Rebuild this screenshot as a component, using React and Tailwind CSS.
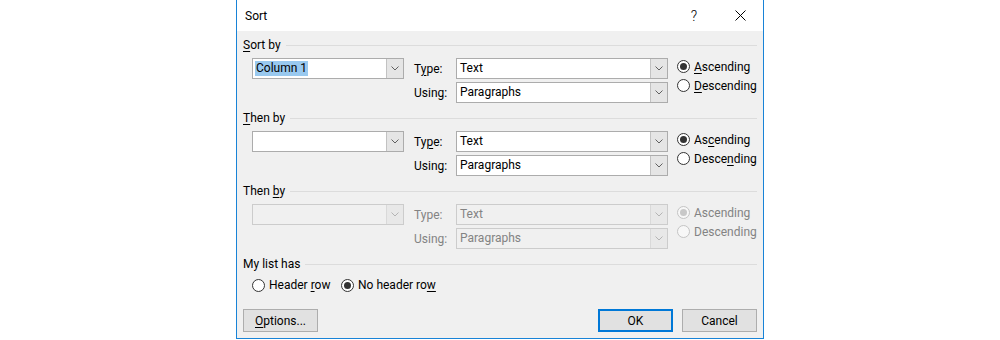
const FONT = "font-['Roboto',sans-serif]"

function K({ children }) {
  return <span className="underline underline-offset-[2px] decoration-1">{children}</span>
}

function Chevron({ disabled }) {
  return (
    <svg width="8" height="5" viewBox="0 0 8 5" className="block">
      <path
        d="M0.5 0.5 L4 4 L7.5 0.5"
        fill="none"
        stroke={disabled ? '#b4b4b4' : '#606060'}
        strokeWidth="1"
      />
    </svg>
  )
}

function Combo({ width, value, selected, disabled }) {
  return (
    <div
      className={
        'flex h-[21px] border ' +
        (disabled ? 'border-[#cccccc] bg-[#f0f0f0]' : 'border-[#acacac] bg-white')
      }
      style={{ width }}
    >
      <div className="flex min-w-0 flex-1 items-center pl-[2px]">
        {value ? (
          <span
            className={
              'px-px leading-[15px] ' +
              (selected ? 'bg-[#99c9ef] text-black' : disabled ? 'text-[#838383]' : 'text-black')
            }
          >
            {value}
          </span>
        ) : null}
      </div>
      <div
        className={
          'flex w-[17px] items-center justify-center border-l ' +
          (disabled ? 'border-[#d9d9d9] bg-[#e8e8e8]' : 'border-[#c2c2c2] bg-[#e5e5e5]')
        }
      >
        <Chevron disabled={disabled} />
      </div>
    </div>
  )
}

function Radio({ checked, disabled, children, className = '' }) {
  return (
    <div className={'flex items-center gap-[4px] ' + className}>
      <div
        className={
          'flex h-[13px] w-[13px] shrink-0 items-center justify-center rounded-full border ' +
          (disabled ? 'border-[#c4c4c4] bg-[#f7f7f7]' : 'border-[#333333] bg-white')
        }
      >
        {checked ? (
          <div
            className={
              'h-[7px] w-[7px] rounded-full ' + (disabled ? 'bg-[#c8c8c8]' : 'bg-[#333333]')
            }
          />
        ) : null}
      </div>
      <span className={disabled ? 'text-[#838383]' : 'text-black'}>{children}</span>
    </div>
  )
}

function Header({ children, className = '' }) {
  return (
    <div className={'flex h-4 items-center px-[6px] ' + className}>
      <span>{children}</span>
      <div className="ml-[5px] h-px flex-1 bg-[#dcdcdc]" />
    </div>
  )
}

function SortSection({ title, column, disabled, typeLabel, asc, desc, className = '' }) {
  const labelColor = disabled ? 'text-[#838383]' : 'text-black'
  return (
    <div className={className}>
      <Header>{title}</Header>
      <div className="mt-[5px] flex pl-[15px]">
        <Combo width={152} value={column} selected={!!column} disabled={disabled} />
        <div className="ml-[10px] flex flex-col gap-[3px]">
          <div className="flex h-[21px] items-center">
            <span className={'w-[42px] ' + labelColor}>{typeLabel}</span>
            <Combo width={212} value="Text" disabled={disabled} />
          </div>
          <div className="flex h-[21px] items-center">
            <span className={'w-[42px] ' + labelColor}>Using:</span>
            <Combo width={212} value="Paragraphs" disabled={disabled} />
          </div>
        </div>
        <div className="-mt-px ml-[9px] flex flex-col">
          <Radio checked disabled={disabled} className="h-[19px]">
            {asc}
          </Radio>
          <Radio disabled={disabled} className="h-[19px]">
            {desc}
          </Radio>
        </div>
      </div>
    </div>
  )
}

function Button({ children, primary }) {
  return (
    <div
      className={
        'flex h-[23px] w-[75px] items-center justify-center bg-[#e1e1e1] ' +
        (primary ? 'border-2 border-[#0078d7]' : 'border border-[#adadad]')
      }
    >
      {children}
    </div>
  )
}

export default function App() {
  return (
    <div className={'flex h-[340px] w-[1000px] justify-center bg-white text-[12px] leading-4 text-black ' + FONT}>
      <div className="flex h-[339px] w-[528px] flex-col border-x border-b border-[#1883d7] bg-[#f0f0f0]">
        <div className="flex h-[31px] shrink-0 items-center bg-white">
          <span className="pl-[8px]">Sort</span>
          <div className="ml-auto flex h-full">
            <div className="flex w-[46px] items-center justify-center text-[14px] font-light">?</div>
            <div className="flex w-[46px] items-center justify-center">
              <svg width="11" height="11" viewBox="0 0 11 11">
                <path d="M0.5 0.5 L10.5 10.5 M10.5 0.5 L0.5 10.5" stroke="#000" strokeWidth="1" />
              </svg>
            </div>
          </div>
        </div>

        <div className="flex flex-1 flex-col pt-[6px]">
          <SortSection
            title={<><K>S</K>ort by</>}
            column="Column 1"
            typeLabel={<>T<K>y</K>pe:</>}
            asc={<><K>A</K>scending</>}
            desc={<><K>D</K>escending</>}
          />
          <SortSection
            className="mt-[7px]"
            title={<><K>T</K>hen by</>}
            typeLabel={<>Ty<K>p</K>e:</>}
            asc={<>As<K>c</K>ending</>}
            desc={<>Desce<K>n</K>ding</>}
          />
          <SortSection
            className="mt-[7px]"
            disabled
            title={<>Then <K>b</K>y</>}
            typeLabel="Type:"
            asc="Ascending"
            desc="Descending"
          />

          <Header className="mt-[7px]">My list has</Header>
          <div className="mt-[5px] flex h-4 items-center pl-[15px]">
            <Radio className="w-[89px]">
              Header <K>r</K>ow
            </Radio>
            <Radio checked>
              No header ro<K>w</K>
            </Radio>
          </div>

          <div className="mt-[16px] flex items-center px-[6px]">
            <Button>
              <span><K>O</K>ptions...</span>
            </Button>
            <div className="ml-auto flex gap-[9px]">
              <Button primary>OK</Button>
              <Button>Cancel</Button>
            </div>
          </div>
        </div>
      </div>
    </div>
  )
}
